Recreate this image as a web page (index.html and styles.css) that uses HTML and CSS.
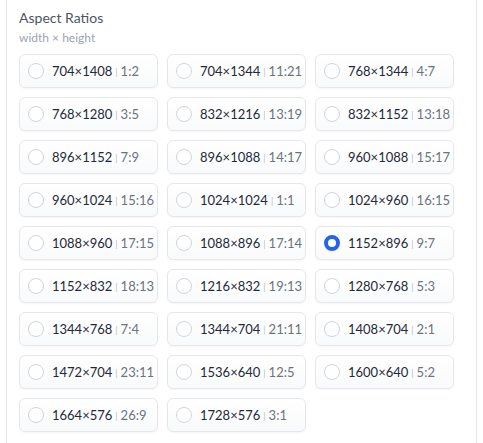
FILE: index.html
```html
<!DOCTYPE html>
<html><head>
<meta charset="utf-8">
<link rel="stylesheet" href="styles.css">
</head>
<body>
  <div class="panel">
    <div class="block-title">Aspect Ratios</div>
    <div class="block-info">width × height</div>
    <div class="ratio-grid">
      <label class="ratio"><span class="dot"></span><span class="size">704×1408</span><span class="bar">|</span><span class="ratio-val">1:2</span></label>
      <label class="ratio"><span class="dot"></span><span class="size">704×1344</span><span class="bar">|</span><span class="ratio-val">11:21</span></label>
      <label class="ratio"><span class="dot"></span><span class="size">768×1344</span><span class="bar">|</span><span class="ratio-val">4:7</span></label>
      <label class="ratio"><span class="dot"></span><span class="size">768×1280</span><span class="bar">|</span><span class="ratio-val">3:5</span></label>
      <label class="ratio"><span class="dot"></span><span class="size">832×1216</span><span class="bar">|</span><span class="ratio-val">13:19</span></label>
      <label class="ratio"><span class="dot"></span><span class="size">832×1152</span><span class="bar">|</span><span class="ratio-val">13:18</span></label>
      <label class="ratio"><span class="dot"></span><span class="size">896×1152</span><span class="bar">|</span><span class="ratio-val">7:9</span></label>
      <label class="ratio"><span class="dot"></span><span class="size">896×1088</span><span class="bar">|</span><span class="ratio-val">14:17</span></label>
      <label class="ratio"><span class="dot"></span><span class="size">960×1088</span><span class="bar">|</span><span class="ratio-val">15:17</span></label>
      <label class="ratio"><span class="dot"></span><span class="size">960×1024</span><span class="bar">|</span><span class="ratio-val">15:16</span></label>
      <label class="ratio"><span class="dot"></span><span class="size">1024×1024</span><span class="bar">|</span><span class="ratio-val">1:1</span></label>
      <label class="ratio"><span class="dot"></span><span class="size">1024×960</span><span class="bar">|</span><span class="ratio-val">16:15</span></label>
      <label class="ratio"><span class="dot"></span><span class="size">1088×960</span><span class="bar">|</span><span class="ratio-val">17:15</span></label>
      <label class="ratio"><span class="dot"></span><span class="size">1088×896</span><span class="bar">|</span><span class="ratio-val">17:14</span></label>
      <label class="ratio selected"><span class="dot"></span><span class="size">1152×896</span><span class="bar">|</span><span class="ratio-val">9:7</span></label>
      <label class="ratio"><span class="dot"></span><span class="size">1152×832</span><span class="bar">|</span><span class="ratio-val">18:13</span></label>
      <label class="ratio"><span class="dot"></span><span class="size">1216×832</span><span class="bar">|</span><span class="ratio-val">19:13</span></label>
      <label class="ratio"><span class="dot"></span><span class="size">1280×768</span><span class="bar">|</span><span class="ratio-val">5:3</span></label>
      <label class="ratio"><span class="dot"></span><span class="size">1344×768</span><span class="bar">|</span><span class="ratio-val">7:4</span></label>
      <label class="ratio"><span class="dot"></span><span class="size">1344×704</span><span class="bar">|</span><span class="ratio-val">21:11</span></label>
      <label class="ratio"><span class="dot"></span><span class="size">1408×704</span><span class="bar">|</span><span class="ratio-val">2:1</span></label>
      <label class="ratio"><span class="dot"></span><span class="size">1472×704</span><span class="bar">|</span><span class="ratio-val">23:11</span></label>
      <label class="ratio"><span class="dot"></span><span class="size">1536×640</span><span class="bar">|</span><span class="ratio-val">12:5</span></label>
      <label class="ratio"><span class="dot"></span><span class="size">1600×640</span><span class="bar">|</span><span class="ratio-val">5:2</span></label>
      <label class="ratio"><span class="dot"></span><span class="size">1664×576</span><span class="bar">|</span><span class="ratio-val">26:9</span></label>
      <label class="ratio"><span class="dot"></span><span class="size">1728×576</span><span class="bar">|</span><span class="ratio-val">3:1</span></label>
    </div>
  </div>
</body>
</html>
```

FILE: styles.css
```css
html, body {
  margin: 0;
  background: #fff;
  height: 100%;
}
body {
  font-family: "Lato", "Noto Sans", sans-serif;
}
.panel {
  margin-left: 6px;
  width: 471px;
  height: 100%;
  box-sizing: border-box;
  border-left: 1px solid #e5e7eb;
  border-right: 1px solid #e5e7eb;
  padding: 8px 12px 0 12px;
}
.block-title {
  font-size: 14px;
  line-height: 20px;
  color: #4b5563;
}
.block-info {
  font-size: 12px;
  line-height: 16px;
  margin-top: 2px;
  color: #9ca3af;
}
.ratio-grid {
  margin-top: 8px;
  display: grid;
  grid-template-columns: repeat(3, 139px);
  gap: 9px;
}
.ratio {
  display: flex;
  align-items: center;
  height: 34px;
  box-sizing: border-box;
  padding: 0 8px;
  border: 1px solid #e5e7eb;
  border-radius: 6px;
  background: linear-gradient(to top, #f9fafb, #ffffff);
  box-shadow: 0 1px 2px rgba(0,0,0,0.04);
  font-size: 13px;
}
.dot {
  width: 16px;
  height: 16px;
  box-sizing: border-box;
  border: 1px solid #d1d5db;
  border-radius: 50%;
  background: #fff;
  margin-right: 8px;
  flex: none;
}
.selected .dot {
  border: 4px solid #2563eb;
  background: #fff;
}
.size {
  color: #1f2937;
}
.bar {
  color: #b8bec7;
  font-size: 9px;
  margin: 0 3px;
}
.ratio-val {
  color: #6b7280;
}
```
